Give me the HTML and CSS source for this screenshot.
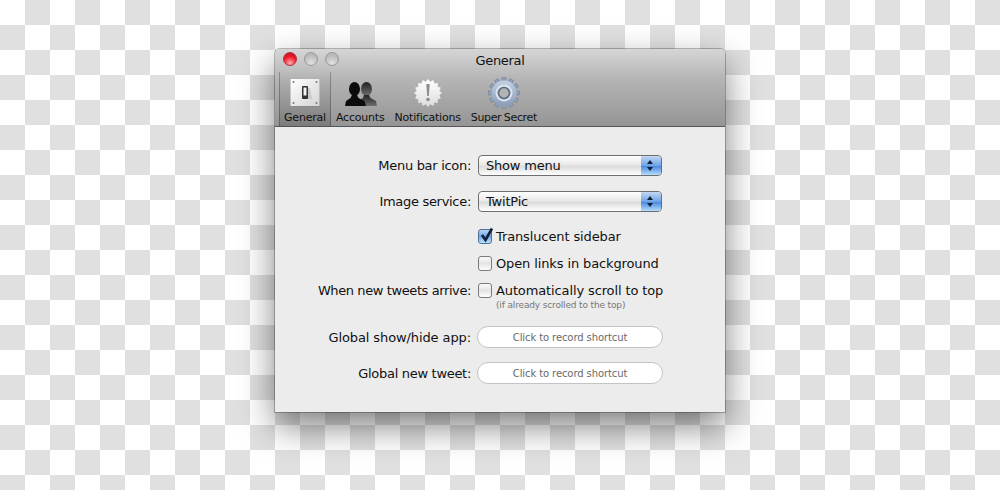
FILE: index.html
```html
<!DOCTYPE html>
<html lang="en">
<head>
    <meta charset="UTF-8">
    <title>General</title>
    <link rel="stylesheet" href="styles.css">
</head>
<body>

    <div class="window">
        <!-- Title bar and toolbar share one gradient -->
        <div class="chrome">
            <div class="titlebar">
                <div class="lights">
                    <span class="light light-close"></span>
                    <span class="light"></span>
                    <span class="light"></span>
                </div>
                <div class="title">General</div>
            </div>

            <div class="toolbar">
                <div class="tool tool-active">
                    <svg class="tool-icon" width="32" height="32" viewBox="0 0 32 32">
                        <defs>
                            <linearGradient id="plate" x1="0" y1="0" x2="1" y2="1">
                                <stop offset="0" stop-color="#ffffff"/>
                                <stop offset="1" stop-color="#d4d4d4"/>
                            </linearGradient>
                        </defs>
                        <rect x="1.500" y="2" width="29" height="28" fill="#8a8a8a"/>
                        <rect x="1.500" y="2" width="29" height="27" fill="url(#plate)"/>
                        <circle cx="4.500" cy="5" r="1" fill="#777"/>
                        <circle cx="27.500" cy="5" r="1" fill="#777"/>
                        <circle cx="4.500" cy="26" r="1" fill="#777"/>
                        <circle cx="27.500" cy="26" r="1" fill="#777"/>
                        <path d="M16 11h5l2 11h-6z" fill="#bbb" opacity="0.6"/>
                        <rect x="13" y="9" width="6" height="13" rx="1" fill="#333"/>
                        <rect x="14.500" y="10.500" width="3" height="8" fill="#f4f4f4"/>
                    </svg>
                    <span>General</span>
                </div>
                <div class="tool">
                    <svg class="tool-icon" width="36" height="32" viewBox="0 -1 36 32">
                        <defs>
                            <linearGradient id="backPerson" x1="0" y1="0" x2="0" y2="1">
                                <stop offset="0" stop-color="#222"/>
                                <stop offset="1" stop-color="#6e6e6e"/>
                            </linearGradient>
                        </defs>
                        <ellipse cx="24.500" cy="11" rx="5.500" ry="7" fill="url(#backPerson)"/>
                        <path d="M22 17h5l1.500 3 5.500 3 1 5H14l2-5 5-3z" fill="url(#backPerson)"/>
                        <ellipse cx="12.500" cy="11" rx="5.500" ry="7" fill="#0c0c0c"/>
                        <path d="M10 17h5l1.500 3 6 3 1.500 5H3l1-5 4.500-3z" fill="#0c0c0c"/>
                    </svg>
                    <span>Accounts</span>
                </div>
                <div class="tool">
                    <svg class="tool-icon" width="32" height="32" viewBox="-2 -2 32 32">
                        <defs>
                            <linearGradient id="burst" x1="0" y1="0" x2="0" y2="1">
                                <stop offset="0" stop-color="#ffffff"/>
                                <stop offset="1" stop-color="#dcdcdc"/>
                            </linearGradient>
                        </defs>
                        <polygon fill="url(#burst)" points="28,14 25.28,16.24 26.93,19.36 23.56,20.39 23.9,23.9 20.39,23.56 19.36,26.93 16.24,25.28 14,28 11.76,25.28 8.64,26.93 7.61,23.56 4.1,23.9 4.44,20.39 1.07,19.36 2.72,16.24 0,14 2.72,11.76 1.07,8.64 4.44,7.61 4.1,4.1 7.61,4.44 8.64,1.07 11.76,2.72 14,0 16.24,2.72 19.36,1.07 20.39,4.44 23.9,4.1 23.56,7.61 26.93,8.64 25.28,11.76"/>
                        <path d="M12.300 5h3.400l-.9 12h-1.600z" fill="#8c8c8c"/>
                        <circle cx="14" cy="20.500" r="1.800" fill="#8c8c8c"/>
                    </svg>
                    <span>Notifications</span>
                </div>
                <div class="tool tool-wide">
                    <svg class="tool-icon" width="32" height="32" viewBox="0 0 32 32">
                        <defs>
                            <linearGradient id="gear" x1="0" y1="0" x2="0" y2="1">
                                <stop offset="0" stop-color="#c3d1e3"/>
                                <stop offset="1" stop-color="#8c9db6"/>
                            </linearGradient>
                        </defs>
                        <g fill="#8d9fb9" stroke="#6f7f98" stroke-width="0.5">
                            <rect x="14" y="0.500" width="4" height="31" transform="rotate(0 16 16)"/>
                            <rect x="14" y="0.500" width="4" height="31" transform="rotate(30 16 16)"/>
                            <rect x="14" y="0.500" width="4" height="31" transform="rotate(60 16 16)"/>
                            <rect x="14" y="0.500" width="4" height="31" transform="rotate(90 16 16)"/>
                            <rect x="14" y="0.500" width="4" height="31" transform="rotate(120 16 16)"/>
                            <rect x="14" y="0.500" width="4" height="31" transform="rotate(150 16 16)"/>
                        </g>
                        <circle cx="16" cy="16" r="12.500" fill="url(#gear)"/>
                        <circle cx="16" cy="16" r="7.500" fill="none" stroke="#dbe4ef" stroke-width="2"/>
                        <circle cx="16" cy="16" r="5.500" fill="#b4b4b4" stroke="#5d6b82" stroke-width="1.500"/>
                    </svg>
                    <span>Super Secret</span>
                </div>
            </div>
        </div>

        <!-- Preferences form -->
        <div class="content">
            <div class="row row-select">
                <label class="field-label">Menu bar icon:</label>
                <div class="popup"><span class="popup-text">Show menu</span><span class="popup-arrows"></span></div>
            </div>
            <div class="row row-select">
                <label class="field-label">Image service:</label>
                <div class="popup"><span class="popup-text">TwitPic</span><span class="popup-arrows"></span></div>
            </div>
            <div class="row row-check row-first-check">
                <label class="field-label"></label>
                <span class="check check-on">
                    <svg width="17" height="17" viewBox="0 0 17 17"><path d="M4 8l3.500 5L14 1.500" fill="none" stroke="#10203a" stroke-width="2.600"/></svg>
                </span>
                <span class="check-text">Translucent sidebar</span>
            </div>
            <div class="row row-check">
                <label class="field-label"></label>
                <span class="check"></span>
                <span class="check-text">Open links in background</span>
            </div>
            <div class="row row-check row-last-check">
                <label class="field-label label-tight">When new tweets arrive:</label>
                <span class="check"></span>
                <span class="check-text">Automatically scroll to top</span>
            </div>
            <div class="note">(if already scrolled to the top)</div>
            <div class="row row-shortcut">
                <label class="field-label label-loose">Global show/hide app:</label>
                <div class="shortcut">Click to record shortcut</div>
            </div>
            <div class="row row-shortcut">
                <label class="field-label">Global new tweet:</label>
                <div class="shortcut">Click to record shortcut</div>
            </div>
        </div>
    </div>

</body>
</html>
```

FILE: styles.css
```css
* {
    margin: 0;
    padding: 0;
    box-sizing: border-box;
}

body {
    width: 1000px;
    height: 490px;
    overflow: hidden;
    padding: 49px 0 0 275px;
    font-family: "DejaVu Sans", sans-serif;
    color: #111;
    background: repeating-conic-gradient(#e0e0e0 0 25%, #fff 0 50%) 0 0 / 50px 50px;
}

.window {
    width: 450px;
    height: 363px;
    display: flex;
    flex-direction: column;
    background-color: #ececec;
    border-radius: 5px 5px 0 0;
    box-shadow: 0 0 0 1px rgba(0, 0, 0, 0.25), 0 14px 34px rgba(0, 0, 0, 0.5);
}

/* Title bar and toolbar */
.chrome {
    height: 78px;
    background: linear-gradient(#d6d6d6, #b4b4b4 40%, #959595);
    border-bottom: 1px solid #555;
    border-radius: 5px 5px 0 0;
}

.titlebar {
    height: 23px;
    position: relative;
    display: flex;
    align-items: center;
    justify-content: center;
}

.lights {
    position: absolute;
    left: 8px;
    top: 3px;
    display: flex;
    gap: 7px;
}

.light {
    width: 14px;
    height: 14px;
    border-radius: 50%;
    border: 1px solid #999;
    background: radial-gradient(circle at 50% 85%, #e2e2e2, #b8b8b8 70%);
}

.light-close {
    border-color: #a33;
    background: radial-gradient(circle at 50% 85%, #ffb0b0, #f2182c 55%, #b8101f);
}

.title {
    font-size: 13px;
    letter-spacing: -0.3px;
    color: #111;
}

.toolbar {
    height: 54px;
    display: flex;
    padding-left: 4px;
}

.tool {
    padding: 0 5px 1px;
    display: flex;
    flex-direction: column;
    align-items: center;
    justify-content: flex-end;
    font-size: 11px;
    line-height: 14px;
    letter-spacing: -0.2px;
    white-space: nowrap;
    color: #111;
}

.tool-icon {
    margin-bottom: 2px;
}

.tool-wide {
    letter-spacing: -0.35px;
    word-spacing: -0.5px;
}

.tool-active {
    background: linear-gradient(rgba(0, 0, 0, 0), rgba(0, 0, 0, 0.16));
    border-left: 1px solid rgba(0, 0, 0, 0.25);
    border-right: 1px solid rgba(0, 0, 0, 0.25);
    padding: 0 4px 1px;
}

/* Form rows */
.content {
    padding-top: 28px;
    display: flex;
    flex-direction: column;
}

.row {
    display: flex;
    align-items: center;
    font-size: 13px;
}

.field-label {
    width: 196px;
    flex-shrink: 0;
    text-align: right;
    letter-spacing: -0.3px;
}

.label-tight {
    letter-spacing: -0.4px;
}

.label-loose {
    letter-spacing: -0.1px;
}

.row-select {
    height: 21px;
    margin-bottom: 15px;
}

.row-first-check {
    margin-top: 1px;
}

.row-check {
    height: 17px;
    margin-bottom: 10px;
}

.row-last-check {
    margin-bottom: 1px;
}

.row-shortcut {
    height: 22px;
    margin-bottom: 14px;
}

.popup {
    width: 184px;
    height: 21px;
    margin-left: 7px;
    display: flex;
    border: 1px solid #6e6e6e;
    border-radius: 4px;
    overflow: hidden;
    background: linear-gradient(#fff, #e9e9e9 45%, #dcdcdc 55%, #fff);
}

.popup-text {
    flex: 1;
    padding-left: 7px;
    line-height: 20px;
    letter-spacing: -0.2px;
}

.popup-arrows {
    width: 20px;
    position: relative;
    background: linear-gradient(#c4d8f2, #6ea4e6 50%, #4e8ade 55%, #b5dcfb);
}

/* Up and down triangles on the blue cap */
.popup-arrows::before,
.popup-arrows::after {
    content: "";
    position: absolute;
    left: 6px;
    border-left: 3.5px solid transparent;
    border-right: 3.5px solid transparent;
}

.popup-arrows::before {
    top: 4px;
    border-bottom: 4px solid #10203a;
}

.popup-arrows::after {
    top: 11px;
    border-top: 4px solid #10203a;
}

.check {
    width: 14px;
    height: 15px;
    margin-left: 7px;
    position: relative;
    flex-shrink: 0;
    border: 1px solid #7a7a7a;
    border-radius: 3px;
    background: linear-gradient(#fbfbfb, #e4e4e4 50%, #fff);
}

.check-on {
    border-color: #4f6f9a;
    background: linear-gradient(#bcd4f2, #6ea6e8 50%, #bfe6fc);
}

.check-on svg {
    position: absolute;
    left: -1px;
    top: -3px;
}

.check-text {
    margin-left: 4px;
    white-space: nowrap;
    letter-spacing: -0.12px;
}

.note {
    margin: 0 0 15px 221px;
    height: 11px;
    font-size: 9px;
    line-height: 11px;
    letter-spacing: -0.15px;
    color: #777;
}

.shortcut {
    width: 186px;
    height: 22px;
    margin-left: 6px;
    background-color: #fff;
    border: 1px solid #c4c4c4;
    border-radius: 11px;
    font-size: 10px;
    line-height: 21px;
    letter-spacing: -0.1px;
    text-align: center;
    color: #6a6a6a;
}
```
